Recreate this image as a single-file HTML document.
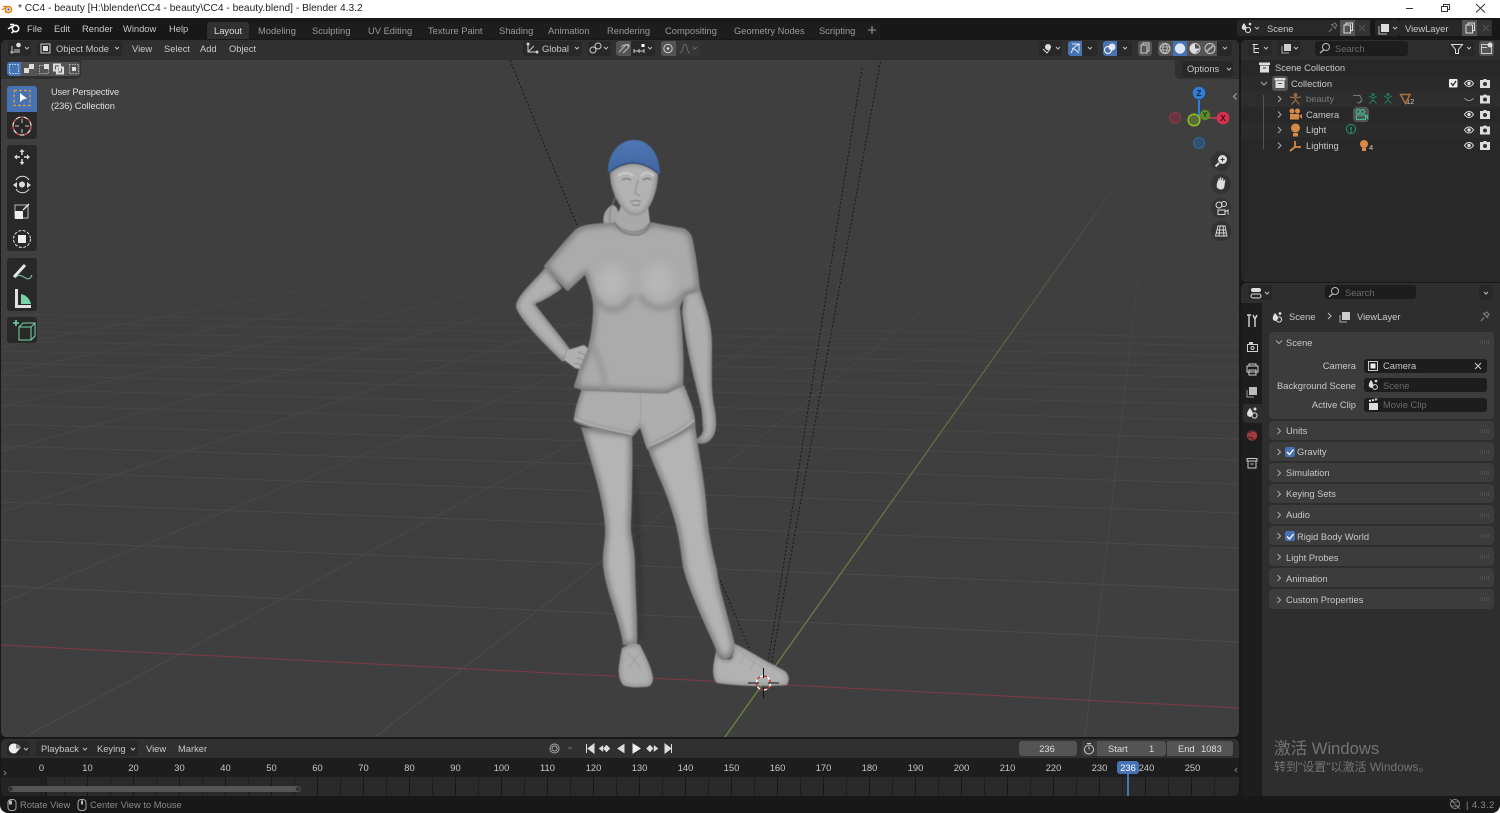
<!DOCTYPE html>
<html lang="zh"><head><meta charset="utf-8"><title>Blender</title>
<style>
html,body{margin:0;padding:0;background:#fff}
#r{position:relative;width:1500px;height:813px;overflow:hidden;background:#fff;font-family:"Liberation Sans","Noto Sans CJK SC",sans-serif;font-size:9.35px;color:#c8c8c8;filter:blur(.3px)}
#r>div,.b{position:absolute}
.t{position:absolute;white-space:nowrap;line-height:12px;transform:translateY(-50%);margin-top:1px}
.c{transform:translate(-50%,-50%)}
.rt{transform:translate(-100%,-50%)}
.d{color:#9a9a9a}
.f{color:#6a6a6a}
svg{position:absolute;left:0;top:0}
.w{background:#282828;border-radius:3px}
.g{background:#545454}
.bl{background:#4772b3}
.p{background:#3c3c3c;border-radius:4px;left:1269px;width:225px}
.tool{background:#282828;left:7px;width:30px}
</style></head><body><div id="r">
<!-- title bar -->
<div style="left:0;top:0;width:1500px;height:18px;background:#fff"></div>
<div class="t" style="left:18px;top:8px;font-size:10.2px;color:#222">* CC4 - beauty [H:\blender\CC4 - beauty\CC4 - beauty.blend] - Blender 4.3.2</div>
<!-- main dark background -->
<div style="left:0;top:18px;width:1500px;height:795px;background:#181818;border-radius:0 0 8px 8px"></div>
<!-- top bar -->
<div style="left:207px;top:22px;width:42px;height:17px;background:#303030;border-radius:3px 3px 0 0"></div>
<div style="left:249px;top:22px;width:631px;height:17px;background:#1d1d1d;border-radius:3px 3px 0 0"></div>
<div class="t" style="left:27px;top:27.5px">File</div>
<div class="t" style="left:54px;top:27.5px">Edit</div>
<div class="t" style="left:82px;top:27.5px">Render</div>
<div class="t" style="left:123px;top:27.5px">Window</div>
<div class="t" style="left:169px;top:27.5px">Help</div>
<div class="t" style="left:214px;top:29.5px;color:#ddd">Layout</div>
<div class="t d" style="left:258px;top:29.5px">Modeling</div>
<div class="t d" style="left:312px;top:29.5px">Sculpting</div>
<div class="t d" style="left:368px;top:29.5px">UV Editing</div>
<div class="t d" style="left:428px;top:29.5px">Texture Paint</div>
<div class="t d" style="left:499px;top:29.5px">Shading</div>
<div class="t d" style="left:548px;top:29.5px">Animation</div>
<div class="t d" style="left:607px;top:29.5px">Rendering</div>
<div class="t d" style="left:665px;top:29.5px">Compositing</div>
<div class="t d" style="left:734px;top:29.5px">Geometry Nodes</div>
<div class="t d" style="left:819px;top:29.5px">Scripting</div>
<div class="w" style="left:1237px;top:20px;width:25px;height:16px"></div>
<div style="left:1262px;top:20px;width:78px;height:16px;background:#282828"></div>
<div class="g" style="left:1340px;top:20px;width:15px;height:16px"></div>
<div style="left:1355px;top:20px;width:15px;height:16px;background:#333"></div>
<div class="w" style="left:1375px;top:20px;width:25px;height:16px"></div>
<div style="left:1400px;top:20px;width:62px;height:16px;background:#282828"></div>
<div class="g" style="left:1462px;top:20px;width:15px;height:16px"></div>
<div style="left:1477px;top:20px;width:15px;height:16px;background:#333"></div>
<div class="t" style="left:1267px;top:27.5px">Scene</div>
<div class="t" style="left:1405px;top:27.5px">ViewLayer</div>

<!-- viewport -->
<div style="left:1px;top:40px;width:1238px;height:697px;background:#3f3f3f;border-radius:5px;overflow:hidden">
<svg width="1238" height="697" viewBox="1 40 1238 697">
<defs>
<linearGradient id="fade" gradientUnits="userSpaceOnUse" x1="0" y1="737" x2="0" y2="160"><stop offset="0" stop-color="#fff"/><stop offset=".65" stop-color="#999"/><stop offset="1" stop-color="#000"/></linearGradient>
<mask id="m" maskUnits="userSpaceOnUse" x="0" y="40" width="1240" height="700"><rect x="0" y="40" width="1240" height="700" fill="url(#fade)"/></mask>
<linearGradient id="cap" x1="0" x2="0" y1="0" y2="1"><stop offset="0" stop-color="#4f78b4"/><stop offset="1" stop-color="#3f659f"/></linearGradient>
<filter id="bl" x="-20%" y="-20%" width="140%" height="140%"><feGaussianBlur stdDeviation=".4"/></filter>
<filter id="b2" x="-50%" y="-50%" width="200%" height="200%"><feGaussianBlur stdDeviation="2"/></filter>
<filter id="b3" x="-50%" y="-50%" width="200%" height="200%"><feGaussianBlur stdDeviation="3"/></filter>
<filter id="b6" x="-80%" y="-80%" width="260%" height="260%"><feGaussianBlur stdDeviation="6"/></filter>
<path id="pRA" d="M684,293L700,289C707,310 712,325 712,345C712,370 711,390 714,405C716,415 717,425 715,432C712,442 704,446 694,442C698,438 704,434 703,428C702,415 702,410 700,403C696,385 686,350 682,312Z"/>
<path id="pLA" d="M546,267C530,285 518,295 516,305C515,315 545,345 563,362L572,352C560,335 545,318 535,304C545,300 555,294 562,288Z"/>
<path id="pLL" d="M581,427C590,460 603,495 605,527C606,540 602,550 603,565C605,590 620,620 623,645L637,645C638,620 635,590 635,565C635,545 630,535 631,525C632,495 633,465 632,434Z"/>
<path id="pRL" d="M648,449C655,470 668,495 673,515C678,530 680,545 683,567C688,590 708,630 717,652C722,664 733,660 735,645C728,615 718,585 717,570C712,550 708,530 707,513C705,480 697,445 695,423Z"/>
<path id="pSH" d="M582,388C578,400 574,412 574,420C578,425 610,432 633,436L640,428C643,436 645,445 647,449C660,445 685,430 695,423C696,415 690,400 684,385Z"/>
<path id="pTS" d="M615,222C600,224 585,223 576,229C565,240 553,255 544,266C552,275 560,284 568,291L585,275C590,290 594,300 593,312C592,330 590,340 588,347C584,360 578,370 578,373C576,380 574,385 574,387L583,390C610,391 640,393 667,393L683,385C684,370 684,345 680,307L685,295L700,290C698,270 696,255 692,237C690,232 686,229 683,228C670,226 660,224 650,222C645,232 625,232 615,222Z"/>
<path id="pHD" d="M610,172C610,190 618,205 626,212C632,217 640,217 645,212C652,205 658,190 658,172C650,160 620,160 610,172Z"/>
<path id="pNK" d="M621,205L615,222C625,234 642,234 650,222L648,205Z"/>
<path id="pSL" d="M622,648C627,645 635,642 640,645C648,660 652,670 653,678C653,684 650,687 645,687C635,688 626,687 623,685C619,680 618,672 619,665C620,658 621,652 622,648Z"/>
<path id="pSR" d="M716,652C719,660 728,662 732,658C734,652 734,648 735,644C745,648 760,658 770,663L785,671C789,675 790,680 787,685C765,687 735,686 717,683C712,678 712,668 716,652Z"/>
<clipPath id="cRA"><use href="#pRA"/></clipPath><clipPath id="cLA"><use href="#pLA"/></clipPath>
<clipPath id="cLL"><use href="#pLL"/></clipPath><clipPath id="cRL"><use href="#pRL"/></clipPath>
<clipPath id="cSH"><use href="#pSH"/></clipPath><clipPath id="cTS"><use href="#pTS"/></clipPath>
<clipPath id="cHD"><use href="#pHD"/></clipPath><clipPath id="cNK"><use href="#pNK"/></clipPath>
<clipPath id="cSL"><use href="#pSL"/></clipPath><clipPath id="cSR"><use href="#pSR"/></clipPath>
</defs>
<g mask="url(#m)" stroke="#4c4c4c" stroke-width="1" fill="none">
<path d="M0,586L1240,642M0,540L1240,590M0,502L1240,548M0,471L1240,513M0,446L1240,484M0,424L1240,460M0,405L1240,439M0,389L1240,421M0,375L1240,405M0,363L1240,391M0,351L1240,378M0,341L1240,367M0,331L1240,356M0,322L1240,346M0,314L1240,338"/>
<path d="M375,737L1155,130M25,737L1155,130M-325,737L1155,130M-675,737L1155,130M-1025,737L1155,130M-1375,737L1155,130M-1725,737L1155,130M-2075,737L1155,130M1085,737L1155,130M1425,737L1155,130M1775,737L1155,130"/>
</g>
<path d="M0,645L1240,708" stroke="#7c3a44" stroke-width="1.1" fill="none"/>
<g mask="url(#m)"><path d="M725,737L1155,130" stroke="#6b8a40" stroke-width="1.3" fill="none"/></g>
<g stroke="#141414" stroke-width=".9" stroke-dasharray="2 2" fill="none">
<path d="M510,60L578,228"/><path d="M862,68L765,682"/><path d="M884,42L768,682"/><path d="M720,580L750,650"/>
</g>
<!-- figure -->
<g filter="url(#b2)" fill="#2c2c2c" opacity=".4"><path d="M632,470C633,500 634,530 636,565C638,590 640,610 638,640L642,640C644,610 642,570 640,525C640,510 638,490 636,470Z"/></g>
<g filter="url(#bl)">
<path d="M612,205C603,210 601,222 606,226L618,222C620,215 618,205 612,205Z" fill="#a4a4a4"/>
<path d="M616,196C612,205 608,212 610,222" stroke="#7d7d7d" fill="none"/>
<g clip-path="url(#cRA)"><use href="#pRA" fill="#aeaeae"/><use href="#pRA" fill="none" stroke="#7a7a7a" stroke-width="4" filter="url(#b2)"/></g>
<g clip-path="url(#cLA)"><use href="#pLA" fill="#b0b0b0"/><use href="#pLA" fill="none" stroke="#7d7d7d" stroke-width="4" filter="url(#b2)"/></g>
<path d="M564,360L568,350L584,345L590,350L601,356L602,362L590,366L586,371L575,368Z" fill="#b0b0b0"/>
<path d="M578,352L592,357M577,358L596,363M575,363L588,367" stroke="#7e7e7e" stroke-width=".7" fill="none"/>
<g clip-path="url(#cLL)"><use href="#pLL" fill="#b4b4b4"/><use href="#pLL" fill="none" stroke="#757575" stroke-width="6" filter="url(#b3)"/></g>
<g clip-path="url(#cRL)"><use href="#pRL" fill="#b4b4b4"/><use href="#pRL" fill="none" stroke="#767676" stroke-width="6" filter="url(#b3)"/></g>
<g clip-path="url(#cSL)"><use href="#pSL" fill="#afafaf"/><use href="#pSL" fill="none" stroke="#858585" stroke-width="3" filter="url(#b2)"/></g>
<path d="M627,652L641,668M639,654L629,668" stroke="#939393" stroke-width=".6" fill="none"/>
<g clip-path="url(#cSR)"><use href="#pSR" fill="#b2b2b2"/><use href="#pSR" fill="none" stroke="#8a8a8a" stroke-width="3" filter="url(#b2)"/></g>
<path d="M738,650L765,670M745,655L739,664M755,660L750,670" stroke="#979797" stroke-width=".6" fill="none"/>
<path d="M716,651C720,663 730,662 734,652" stroke="#8c8c8c" stroke-width=".8" fill="none"/>
<g clip-path="url(#cSH)"><use href="#pSH" fill="#adadad"/><use href="#pSH" fill="none" stroke="#828282" stroke-width="5" filter="url(#b2)"/></g>
<path d="M574,420C580,425 610,433 633,436M647,449C660,445 685,432 695,423" stroke="#838383" stroke-width="1.8" fill="none"/>
<path d="M574,418C580,423 610,430 632,434M648,446C660,442 684,430 694,420" stroke="#c4c4c4" stroke-width=".9" fill="none"/>
<path d="M640,392C642,405 640,418 640,428" stroke="#9c9c9c" stroke-width="1" fill="none"/>
<g clip-path="url(#cTS)">
<use href="#pTS" fill="#ababab"/>
<use href="#pTS" fill="none" stroke="#7c7c7c" stroke-width="7" filter="url(#b3)"/>
<path d="M635,250V298" stroke="#959595" stroke-width="8" filter="url(#b6)" fill="none"/>
<ellipse cx="612" cy="283" rx="15" ry="18" fill="#bdbdbd" opacity=".7" filter="url(#b6)"/>
<ellipse cx="658" cy="282" rx="15" ry="18" fill="#bdbdbd" opacity=".7" filter="url(#b6)"/>
<path d="M596,298C605,316 625,312 632,295M640,295C648,312 670,312 680,298" stroke="#868686" stroke-width="4" filter="url(#b3)" fill="none"/>
<path d="M592,345C600,360 606,380 604,392" fill="none" stroke="#939393" stroke-width="4" filter="url(#b3)"/>
</g>
<path d="M544,266C552,275 560,284 568,291M685,295L700,290" stroke="#858585" stroke-width=".8" fill="none"/>
<path d="M574,387L583,390C610,391 640,393 667,393L683,385" stroke="#7a7a7a" stroke-width="1" fill="none"/>
<g clip-path="url(#cNK)"><use href="#pNK" fill="#a9a9a9"/></g>
<path d="M615,222C618,232 628,235 635,235C642,235 648,232 650,222" stroke="#6f6f6f" stroke-width="1" fill="none"/>
<g clip-path="url(#cHD)"><use href="#pHD" fill="#b2b2b2"/><use href="#pHD" fill="none" stroke="#848484" stroke-width="4" filter="url(#b2)"/></g>
<path d="M618,176C624,171 630,173 633,176M641,176C645,171 650,172 654,176" stroke="#d2d2d2" stroke-width="1.6" fill="none"/>
<path d="M622,180C625,178 628,178 631,180M643,180C646,178 649,178 651,180" stroke="#555" stroke-width="1" fill="none"/>
<path d="M638,180L635,193L640,196" stroke="#808080" stroke-width=".8" fill="none"/>
<path d="M630,202C634,200 638,200 641,202M632,204C635,206 638,206 640,204" stroke="#6b6b6b" stroke-width=".9" fill="none"/>
<path d="M608,174C607,155 618,140 634,140C650,140 660,155 660,175C652,168 642,163 632,163C622,164 612,170 608,174Z" fill="url(#cap)"/>
<path d="M608,174C614,168 622,164 632,163C642,163 652,168 660,175" stroke="#23375a" stroke-width="1.2" fill="none"/>
<path d="M634,141L635,162M622,144C619,150 618,158 618,166M647,144C650,150 651,158 652,166" stroke="#446ca8" stroke-width=".6" fill="none"/>
</g>
<!-- 3D cursor -->
<circle cx="763.5" cy="683" r="7" fill="none" stroke="#fff" stroke-width="1.4" stroke-dasharray="3.6 3.7"/>
<circle cx="763.5" cy="683" r="7" fill="none" stroke="#d23333" stroke-width="1.4" stroke-dasharray="3.6 3.7" stroke-dashoffset="3.6"/>
<path d="M748,683H759M768,683H779M763.5,668V678M763.5,688V698" stroke="#111" stroke-width="1"/>
</svg>
</div>
<!-- viewport header -->
<div style="left:1px;top:40px;width:1238px;height:20px;background:#303030;border-radius:5px 5px 0 0"></div>
<div style="left:1px;top:60px;width:80px;height:19px;background:#303030;border-radius:0 0 5px 0"></div>
<div style="left:1175px;top:60px;width:64px;height:19px;background:#303030;border-radius:0 0 0 5px"></div>
<div class="w" style="left:8px;top:41px;width:23px;height:15px"></div>
<div class="w" style="left:37px;top:41px;width:85px;height:15px"></div>
<div class="t" style="left:56px;top:47.5px">Object Mode</div>
<div class="t" style="left:132px;top:47.5px">View</div>
<div class="t" style="left:164px;top:47.5px">Select</div>
<div class="t" style="left:200px;top:47.5px">Add</div>
<div class="t" style="left:229px;top:47.5px">Object</div>
<div class="w" style="left:523px;top:41px;width:59px;height:15px"></div>
<div class="t" style="left:542px;top:47.5px">Global</div>
<div class="w" style="left:588px;top:41px;width:23px;height:15px"></div>
<div class="g" style="left:616px;top:41px;width:15px;height:15px;border-radius:3px 0 0 3px"></div>
<div class="w" style="left:631px;top:41px;width:24px;height:15px;border-radius:0 3px 3px 0"></div>
<div class="g" style="left:661px;top:41px;width:15px;height:15px;border-radius:3px 0 0 3px"></div>
<div style="left:676px;top:41px;width:24px;height:15px;background:#353535;border-radius:0 3px 3px 0"></div>
<div class="w" style="left:1039px;top:41px;width:23px;height:15px"></div>
<div class="bl" style="left:1068px;top:41px;width:14px;height:15px;border-radius:3px 0 0 3px"></div>
<div class="w" style="left:1082px;top:41px;width:15px;height:15px;border-radius:0 3px 3px 0"></div>
<div class="bl" style="left:1103px;top:41px;width:14px;height:15px;border-radius:3px 0 0 3px"></div>
<div class="w" style="left:1117px;top:41px;width:15px;height:15px;border-radius:0 3px 3px 0"></div>
<div class="g" style="left:1138px;top:41px;width:14px;height:15px;border-radius:3px"></div>
<div class="g" style="left:1158px;top:41px;width:59px;height:15px;border-radius:3px 0 0 3px"></div>
<div class="bl" style="left:1173px;top:41px;width:14px;height:15px"></div>
<div class="w" style="left:1217px;top:41px;width:15px;height:15px;border-radius:0 3px 3px 0"></div>
<div class="w" style="left:1182px;top:61px;width:51px;height:16px"></div>
<div class="t" style="left:1187px;top:68px">Options</div>
<!-- select mode row -->
<div class="bl" style="left:7px;top:62px;width:14px;height:14px;border-radius:3px 0 0 3px"></div>
<div style="left:21px;top:62px;width:59px;height:14px;background:#545454;border-radius:0 3px 3px 0"></div>
<div class="t" style="left:51px;top:90.5px;color:#ddd;letter-spacing:-.2px">User Perspective</div>
<div class="t" style="left:51px;top:104.5px;color:#ddd;letter-spacing:-.1px">(236) Collection</div>
<!-- tools -->
<div class="bl" style="left:7px;top:86px;width:30px;height:26px;border-radius:3px 3px 0 0"></div>
<div class="tool" style="top:112px;height:27px;border-radius:0 0 3px 3px"></div>
<div class="tool" style="top:145px;height:106px;border-radius:3px"></div>
<div class="tool" style="top:258px;height:53px;border-radius:3px"></div>
<div class="tool" style="top:317px;height:26px;border-radius:3px"></div>
<!-- nav buttons -->
<div style="left:1211px;top:151px;width:20px;height:20px;border-radius:50%;background:#333"></div>
<div style="left:1211px;top:174px;width:20px;height:20px;border-radius:50%;background:#333"></div>
<div style="left:1211px;top:198px;width:20px;height:20px;border-radius:50%;background:#333"></div>
<div style="left:1211px;top:221px;width:20px;height:20px;border-radius:50%;background:#333"></div>

<!-- timeline -->
<div style="left:1px;top:739px;width:1238px;height:57px;background:#2a2a2a;border-radius:5px;overflow:hidden">
 <div style="position:absolute;left:0;top:0;width:1238px;height:19px;background:#303030"></div>
 <div style="position:absolute;left:0;top:19px;width:1238px;height:19px;background:#1d1d1d"></div>
 <div style="position:absolute;left:0;top:38px;width:45px;height:19px;background:#232323"></div>
</div>
<div class="w" style="left:7px;top:741px;width:23px;height:15px"></div>
<div class="w" style="left:36px;top:741px;width:102px;height:15px"></div>
<div class="t" style="left:41px;top:748px">Playback</div>
<div class="t" style="left:97px;top:748px">Keying</div>
<div class="t" style="left:146px;top:748px">View</div>
<div class="t" style="left:178px;top:748px">Marker</div>
<div class="g" style="left:1019px;top:741px;width:58px;height:15px;border-radius:3px"></div>
<div class="t c" style="left:1047px;top:748px;color:#ddd">236</div>
<div class="g" style="left:1082px;top:741px;width:84px;height:15px;border-radius:3px"></div>
<div class="g" style="left:1167px;top:741px;width:66px;height:15px;border-radius:0 3px 3px 0"></div>
<div style="left:1082px;top:741px;width:15px;height:15px;background:#3c3c3c;border-radius:3px 0 0 3px"></div>
<div class="t" style="left:1108px;top:748px;color:#ddd">Start</div>
<div class="t" style="left:1149px;top:748px;color:#ddd">1</div>
<div class="t" style="left:1178px;top:748px;color:#ddd">End</div>
<div class="t" style="left:1201px;top:748px;color:#ddd">1083</div>
<svg width="1500" height="813" style="pointer-events:none">
<g stroke="#1f1f1f" stroke-width="1"><path d="M64.5,777V796M110.5,777V796M156.5,777V796M202.5,777V796M248.5,777V796M294.5,777V796M340.5,777V796M386.5,777V796M432.5,777V796M478.5,777V796M524.5,777V796M570.5,777V796M616.5,777V796M662.5,777V796M708.5,777V796M754.5,777V796M800.5,777V796M846.5,777V796M892.5,777V796M938.5,777V796M984.5,777V796M1030.5,777V796M1076.5,777V796M1122.5,777V796M1168.5,777V796M1214.5,777V796"/></g>
<g stroke="#181818" stroke-width="1"><path d="M41.5,777V796M87.5,777V796M133.5,777V796M179.5,777V796M225.5,777V796M271.5,777V796M317.5,777V796M363.5,777V796M409.5,777V796M455.5,777V796M501.5,777V796M547.5,777V796M593.5,777V796M639.5,777V796M685.5,777V796M731.5,777V796M777.5,777V796M823.5,777V796M869.5,777V796M915.5,777V796M961.5,777V796M1007.5,777V796M1053.5,777V796M1099.5,777V796M1145.5,777V796M1191.5,777V796"/></g>
<path d="M46,777V796" stroke="#111"/>
<rect x="8" y="786" width="293" height="6" rx="3" fill="#555"/>
<circle cx="10.5" cy="789" r="2.3" fill="#333"/><circle cx="298" cy="789" r="2.3" fill="#333"/>
</svg>
<div class="t c" style="left:41.5px;top:767px">0</div><div class="t c" style="left:87.5px;top:767px">10</div><div class="t c" style="left:133.5px;top:767px">20</div><div class="t c" style="left:179.5px;top:767px">30</div><div class="t c" style="left:225.5px;top:767px">40</div><div class="t c" style="left:271.5px;top:767px">50</div><div class="t c" style="left:317.5px;top:767px">60</div><div class="t c" style="left:363.5px;top:767px">70</div><div class="t c" style="left:409.5px;top:767px">80</div><div class="t c" style="left:455.5px;top:767px">90</div><div class="t c" style="left:501.5px;top:767px">100</div><div class="t c" style="left:547.5px;top:767px">110</div><div class="t c" style="left:593.5px;top:767px">120</div><div class="t c" style="left:639.5px;top:767px">130</div><div class="t c" style="left:685.5px;top:767px">140</div><div class="t c" style="left:731.5px;top:767px">150</div><div class="t c" style="left:777.5px;top:767px">160</div><div class="t c" style="left:823.5px;top:767px">170</div><div class="t c" style="left:869.5px;top:767px">180</div><div class="t c" style="left:915.5px;top:767px">190</div><div class="t c" style="left:961.5px;top:767px">200</div><div class="t c" style="left:1007.5px;top:767px">210</div><div class="t c" style="left:1053.5px;top:767px">220</div><div class="t c" style="left:1099.5px;top:767px">230</div><div class="t c" style="left:1146.5px;top:767px">240</div><div class="t c" style="left:1192.5px;top:767px">250</div>
<div class="bl" style="left:1117px;top:761px;width:22px;height:13px;border-radius:3px"></div>
<div class="bl" style="left:1127px;top:774px;width:2px;height:22px"></div>
<div class="t c" style="left:1128px;top:766.5px;color:#fff">236</div>

<!-- status bar -->
<div class="t f" style="left:20px;top:803.5px;color:#8a8a8a">Rotate View</div>
<div class="t f" style="left:90px;top:803.5px;color:#8a8a8a">Center View to Mouse</div>
<div class="t" style="left:1466px;top:803.5px;color:#8a8a8a;letter-spacing:.4px">| 4.3.2</div>

<!-- outliner -->
<div style="left:1241px;top:40px;width:259px;height:242px;background:#282828;border-radius:5px 0 0 5px;overflow:hidden">
 <div style="position:absolute;left:0;top:0;width:259px;height:20px;background:#2e2e2e"></div>
 <div style="position:absolute;left:0;top:35.5px;width:259px;height:15.5px;background:#2b2b2b"></div>
 <div style="position:absolute;left:0;top:51px;width:259px;height:15.5px;background:#2d2d2d"></div>
 <div style="position:absolute;left:0;top:82px;width:259px;height:15.5px;background:#2b2b2b"></div>
</div>
<div class="w" style="left:1248px;top:41px;width:24px;height:15px"></div>
<div class="w" style="left:1277px;top:41px;width:24px;height:15px"></div>
<div style="left:1315px;top:41px;width:93px;height:15px;background:#1d1d1d;border-radius:3px"></div>
<div class="t f" style="left:1335px;top:47.5px">Search</div>
<div class="w" style="left:1449px;top:41px;width:25px;height:15px"></div>
<div class="g" style="left:1479px;top:41px;width:15px;height:15px;border-radius:3px"></div>
<div class="t" style="left:1275px;top:67px">Scene Collection</div>
<div style="left:1272px;top:76px;width:16px;height:15px;background:#545454;border-radius:3px"></div>
<div class="t" style="left:1291px;top:82.5px">Collection</div>
<div class="t" style="left:1306px;top:98px;color:#7a7a7a">beauty</div>
<div class="t" style="left:1306px;top:113.5px">Camera</div>
<div class="t" style="left:1306px;top:129px">Light</div>
<div class="t" style="left:1306px;top:144.5px">Lighting</div>
<div style="left:1353px;top:107px;width:16px;height:15px;background:#545454;border-radius:4px"></div>
<div class="t" style="left:1406px;top:101px;font-size:7.5px">12</div>
<div class="t" style="left:1369px;top:147px;font-size:7.5px">4</div>

<!-- properties -->
<div style="left:1241px;top:283px;width:259px;height:513px;background:#2e2e2e;border-radius:5px 0 0 5px"></div>
<div style="left:1241px;top:303px;width:21px;height:493px;background:#1d1d1d;border-radius:0 0 0 5px"></div>
<div style="left:1243px;top:404px;width:19px;height:19px;background:#2e2e2e;border-radius:3px 0 0 3px"></div>
<div class="w" style="left:1248px;top:285px;width:24px;height:15px"></div>
<div style="left:1325px;top:285px;width:91px;height:14px;background:#1d1d1d;border-radius:3px"></div>
<div class="t f" style="left:1345px;top:291.5px">Search</div>
<div class="w" style="left:1479px;top:285px;width:14px;height:15px"></div>
<div class="t" style="left:1289px;top:315.5px">Scene</div>
<div class="t" style="left:1357px;top:315.5px">ViewLayer</div>
<div class="p" style="top:332px;height:87px"></div>
<div class="p" style="top:421px;height:19px"></div>
<div class="p" style="top:442px;height:19px"></div>
<div class="p" style="top:463px;height:19px"></div>
<div class="p" style="top:484px;height:19px"></div>
<div class="p" style="top:505px;height:19px"></div>
<div class="p" style="top:526px;height:19px"></div>
<div class="p" style="top:547px;height:19px"></div>
<div class="p" style="top:568px;height:19px"></div>
<div class="p" style="top:589px;height:20px"></div>
<div class="t" style="left:1286px;top:341.5px">Scene</div>
<div class="t rt" style="left:1356px;top:365px">Camera</div>
<div class="t rt" style="left:1356px;top:384.5px">Background Scene</div>
<div class="t rt" style="left:1356px;top:404px">Active Clip</div>
<div style="left:1364px;top:359px;width:123px;height:14px;background:#1d1d1d;border-radius:3px"></div>
<div style="left:1364px;top:378px;width:123px;height:14px;background:#1d1d1d;border-radius:3px"></div>
<div style="left:1364px;top:398px;width:123px;height:14px;background:#1d1d1d;border-radius:3px"></div>
<div class="t" style="left:1383px;top:365px">Camera</div>
<div class="t f" style="left:1383px;top:384.5px">Scene</div>
<div class="t f" style="left:1383px;top:404px">Movie Clip</div>
<div class="t" style="left:1286px;top:430px">Units</div>
<div class="bl" style="left:1285px;top:447px;width:10px;height:10px;border-radius:2px"></div>
<div class="t" style="left:1297px;top:451px">Gravity</div>
<div class="t" style="left:1286px;top:472px">Simulation</div>
<div class="t" style="left:1286px;top:493px">Keying Sets</div>
<div class="t" style="left:1286px;top:514px">Audio</div>
<div class="bl" style="left:1285px;top:531px;width:10px;height:10px;border-radius:2px"></div>
<div class="t" style="left:1297px;top:535.5px">Rigid Body World</div>
<div class="t" style="left:1286px;top:556.5px">Light Probes</div>
<div class="t" style="left:1286px;top:577.5px">Animation</div>
<div class="t" style="left:1286px;top:599px">Custom Properties</div>
<div class="t" style="left:1274px;top:747.5px;font-size:16.6px;color:#747474">激活 Windows</div>
<div class="t" style="left:1274px;top:766px;font-size:12px;color:#747474">转到"设置"以激活 Windows。</div>

<!-- icon overlay -->
<svg width="1500" height="813" fill="none" stroke="#cfcfcf" stroke-width="1">
<!-- window controls -->
<path d="M1406,8.5H1413" stroke="#333"/><path d="M1441.5,6.5H1447.5V11.5H1441.5ZM1443.5,6.5V4.5H1449.5V9.5H1447.5" stroke="#333"/><path d="M1476,4L1485,12.5M1485,4L1476,12.5" stroke="#333"/>
<!-- blender logos -->
<circle cx="8.5" cy="9.5" r="3" fill="#fff" stroke="#e87d0d" stroke-width="1.5"/><circle cx="8.5" cy="9.5" r="1.2" fill="#3b6cb0" stroke="none"/><path d="M2,10L6,7.5M3,6.5H7M5,13L7,11" stroke="#e87d0d" stroke-width="1.3"/>
<circle cx="15.5" cy="28.5" r="3.2" stroke="#fff" stroke-width="1.6"/><path d="M8,29L12.5,26M10,24.5H14M11.5,33L14,31" stroke="#fff" stroke-width="1.5"/>
<path d="M868,30H876M872,26V34" stroke="#9a9a9a" stroke-width="1.1"/>
<!-- chevrons -->
<g stroke="#c0c0c0" stroke-width="1"><path d="M25,47L27,49L29,47M115,47L117,49L119,47M575,47L577,49L579,47M604,47L606,49L608,47M648,47L650,49L652,47M1056,47L1058,49L1060,47M1088,47L1090,49L1092,47M1123,47L1125,49L1127,47M1223,47L1225,49L1227,47M1227,68L1229,70L1231,68M1264,47L1266,49L1268,47M1294,47L1296,49L1298,47M1467,47L1469,49L1471,47M1265,292L1267,294L1269,292M1484,292L1486,294L1488,292M24,748L26,750L28,748M83,748L85,750L87,748M131,748L133,750L135,748M1255,27L1257,29L1259,27M1393,27L1395,29L1397,27"/></g>
<path d="M693,47L695,49L697,47" stroke="#666"/>
<!-- editor type viewport -->
<path d="M12,46V54M10,52H20M14,50H20" stroke="#d0d0d0"/><circle cx="18.5" cy="45" r="2.3" fill="#e0e0e0" stroke="none"/>
<!-- object mode -->
<rect x="41" y="44" width="9" height="9" stroke="#ccc"/><rect x="43" y="46" width="5" height="5" fill="#ddd" stroke="none"/>
<!-- select mode icons -->
<rect x="9.5" y="64.5" width="9" height="9" stroke="#bcd4f4" stroke-dasharray="1.5 1"/>
<path d="M24,73V68H29V64H34V69H29V73Z" fill="#ddd" stroke="none"/>
<rect x="39.5" y="65.5" width="9" height="8" stroke="#aaa" stroke-dasharray="1.5 1"/><rect x="44" y="64" width="5" height="5" fill="#ddd" stroke="none"/>
<rect x="54" y="64.5" width="6" height="6" stroke="#ddd" stroke-width="2"/><rect x="57" y="67.5" width="6" height="6" stroke="#ddd" stroke-width="2"/>
<rect x="69.5" y="64.5" width="9" height="9" stroke="#aaa" stroke-dasharray="1.5 1"/><rect x="72" y="67" width="4" height="4" fill="#ddd" stroke="none"/>
<!-- tool icons -->
<rect x="14" y="90.5" width="16" height="15" stroke="#e2a33b" stroke-width="1.2" stroke-dasharray="3 2"/><path d="M20,93L20,102L23,99.5L27,98.5Z" fill="#fff" stroke="none"/>
<circle cx="22" cy="126" r="9" stroke="#ddd" stroke-width="1.3"/><circle cx="22" cy="126" r="9" stroke="#c83a3a" stroke-width="1.3" stroke-dasharray="4 4"/><path d="M22,119V123M22,129V133M15,126H19M25,126H29" stroke="#ccc"/>
<path d="M22,151V155M22,159V163M16,157H20M24,157H28" stroke="#ddd" stroke-width="1.5"/><path d="M22,149L19.5,152H24.5ZM22,165L19.5,162H24.5ZM14,157L17,154.5V159.5ZM30,157L27,154.5V159.5Z" fill="#ddd" stroke="none"/>
<circle cx="22" cy="184.5" r="3" fill="#ddd" stroke="none"/><path d="M16,180C19,175 26,175 29,180M16,189C19,194 26,194 29,189" stroke="#ddd"/><path d="M13,185L17,182V188ZM31,185L27,182V188Z" fill="#ddd" stroke="none"/>
<rect x="15" y="205" width="13" height="13" stroke="#bbb"/><rect x="15" y="211" width="8" height="8" fill="#eee" stroke="none"/><path d="M23,210L29,204" stroke="#eee" stroke-width="1.3"/>
<circle cx="22" cy="239" r="8.5" stroke="#ddd" stroke-dasharray="3 1.5"/><rect x="18" y="235" width="8" height="8" fill="#eee" stroke="none"/>
<path d="M14,277L25,265" stroke="#e8e8e8" stroke-width="3"/><path d="M15,278C20,272 24,278 28,279C30,279 31,277 32,275" stroke="#74c39e" stroke-width="1.1"/>
<path d="M15,289H18V305H31V308H15Z" fill="#e0e0e0" stroke="none"/><path d="M21,294C26,295 30,299 31,304H21Z" fill="#78d3a6" stroke="none"/>
<path d="M19,327H31V340H19ZM19,327L23,323H35V336L31,340M31,327L35,323" stroke="#77d3a5" stroke-width="1"/><path d="M16,320V326M13,323H19" stroke="#77d3a5" stroke-width="1.6"/>
<!-- header center icons -->
<path d="M528,44V52H536M528,52L534,46" stroke="#ccc"/><circle cx="528" cy="44" r="1" fill="#ccc"/><circle cx="537" cy="52" r="1" fill="#ccc"/>
<circle cx="593" cy="50" r="3" stroke="#ccc"/><circle cx="598" cy="46" r="3" stroke="#ccc"/>
<path d="M619,52L626,45C629,43 630,46 628,48L623,53M621,47C624,44 627,44 629,47" stroke="#bbb"/>
<path d="M634,49V53M634,51H644M639,49V53M644,49V53" stroke="#ccc"/><rect x="641.5" y="44" width="3" height="3" fill="#fff" stroke="none"/>
<circle cx="668" cy="48.5" r="4.2" stroke="#ccc"/><circle cx="668" cy="48.5" r="1.2" fill="#eee" stroke="none"/>
<path d="M680,53C683,53 683,44 685,44C687,44 687,53 690,53" stroke="#666"/>
<!-- overlays -->
<circle cx="1048" cy="47" r="3" fill="#ddd" stroke="none"/><path d="M1043,49L1047,53L1050,49" stroke="#ddd"/>
<path d="M1071,53C1074,46 1077,45 1080,44M1072,44H1079V51M1072,48C1075,49 1078,52 1079,53" stroke="#e0e8f4"/>
<circle cx="1112" cy="47" r="3.5" fill="#dfe6f2" stroke="none"/><circle cx="1108" cy="50" r="3.5" stroke="#fff"/>
<rect x="1141" y="45" width="6" height="8" stroke="#ccc"/><path d="M1143,45V43H1149V51H1147" stroke="#ccc"/>
<circle cx="1165" cy="48.5" r="5" stroke="#ccc"/><path d="M1160,47H1170M1160,50H1170M1165,43.5C1162,46 1162,51 1165,53.5C1168,51 1168,46 1165,43.5Z" stroke="#ccc" stroke-width=".8"/>
<circle cx="1180" cy="48.5" r="5.2" fill="#dfe7f4" stroke="none"/>
<circle cx="1195" cy="48.5" r="5" stroke="#ccc"/><path d="M1195,43.5A5,5 0 0 0 1195,53.5L1200,48.5H1195Z" fill="#ddd" stroke="none"/>
<circle cx="1210" cy="48.5" r="5" stroke="#ccc"/><path d="M1206,52L1214,45" stroke="#aaa" stroke-width="2"/>
<!-- gizmo -->
<path d="M1199,100V118" stroke="#2f80d8" stroke-width="2"/><path d="M1199,118H1217" stroke="#cf3a50" stroke-width="1.6"/>
<circle cx="1205" cy="115" r="5.2" fill="#5b8a28" stroke="none"/>
<circle cx="1175" cy="118" r="5.5" fill="#6c3440" stroke="#8b3a48"/>
<circle cx="1199" cy="143" r="5.5" fill="#34506f" stroke="#2f6aab"/>
<circle cx="1194" cy="120" r="5.8" fill="#5a6a3a" stroke="#8cc51f" stroke-width="1.5"/>
<circle cx="1199" cy="93" r="6.3" fill="#2d7fd6" stroke="none"/>
<circle cx="1223" cy="118" r="6.3" fill="#d6304e" stroke="none"/>
<g font-family="Liberation Sans, sans-serif" font-size="8" font-weight="bold" fill="#10253f" stroke="none" text-anchor="middle">
<text x="1199" y="96">Z</text><text x="1223" y="121" fill="#3a0a14">X</text><text x="1205" y="117" fill="#1e3208" font-size="7">Y</text></g>
<path d="M1236.5,93.5L1233.5,96.5L1236.5,99.5" stroke="#aaa"/>
<!-- nav icons -->
<circle cx="1222.5" cy="159.5" r="4.5" fill="#ddd" stroke="none"/><path d="M1219,163L1215.5,166.5" stroke="#ddd" stroke-width="2"/><path d="M1220.5,159.5H1224.5M1222.5,157.5V161.5" stroke="#333"/>
<path d="M1217,185L1218,181V183L1219,178V182L1221,177V182L1223,178V182L1225,180L1224,187C1223,190 1219,190 1217,187Z" fill="#ddd" stroke="#ddd" stroke-width=".6"/>
<circle cx="1219" cy="205" r="3" stroke="#ddd"/><circle cx="1224" cy="204" r="2.5" stroke="#ddd"/><rect x="1218" y="210" width="7" height="4.5" stroke="#ddd"/><path d="M1225,212L1228,210V214.5" stroke="#ddd"/>
<path d="M1218,226H1225L1227,236H1215.5ZM1216.5,230H1226M1216,233H1226.5M1220,226L1219,236M1223,226L1224,236" stroke="#ddd" stroke-width=".9"/>
<!-- timeline icons -->
<path d="M16,744A5,5 0 1 0 16,753L20,748.5Z" fill="#eee" stroke="none"/><path d="M16,744A5,5 0 0 1 21,748.5H16Z" fill="#888" stroke="none"/>
<circle cx="554.5" cy="748.5" r="4.5" stroke="#aaa"/><circle cx="554.5" cy="748.5" r="2.5" stroke="#aaa"/>
<path d="M568,747L570,749L572,747" stroke="#666"/>
<path d="M586.5,744V753M594,744L588,748.5L594,753Z" fill="#ddd" stroke="#ddd"/>
<path d="M599,748.5L603,745.5V751.5ZM606.5,745L610,748.5L606.5,752L603.5,748.5Z" fill="#ddd" stroke="#ddd" stroke-width=".5"/>
<path d="M624,744.5L618,748.5L624,752.5Z" fill="#ddd" stroke="#ddd"/>
<path d="M633,744L640,748.5L633,753Z" fill="#eee" stroke="#eee"/>
<path d="M650,745L653,748.5L650,752L646.5,748.5ZM654,745.5L658,748.5L654,751.5Z" fill="#ddd" stroke="#ddd" stroke-width=".5"/>
<path d="M665,744L671,748.5L665,753ZM671.5,744V753" fill="#ddd" stroke="#ddd"/>
<circle cx="1089" cy="749.5" r="4.5" stroke="#ccc"/><path d="M1087,743.5H1091M1089,749.5V746.5" stroke="#ccc"/>
<path d="M4,771L6,773L4,775M1237,768L1235,770L1237,772" stroke="#777"/>
<!-- status icons -->
<rect x="8" y="799.5" width="8" height="11" rx="3" stroke="#aaa"/><rect x="9" y="800.5" width="3" height="4" fill="#bbb" stroke="none"/>
<rect x="78" y="799.5" width="8" height="11" rx="3" stroke="#aaa"/><rect x="81" y="800.5" width="2" height="4" fill="#bbb" stroke="none"/>
<circle cx="1455" cy="804" r="4.5" stroke="#888"/><path d="M1450,799L1460,809M1451,802H1459M1451,806H1459" stroke="#888" stroke-width=".8"/>
<!-- top right -->
<path d="M1244,23C1241,27 1241,29 1244,30C1247,29 1247,27 1244,23Z" fill="#ddd" stroke="none"/><circle cx="1250" cy="24" r="1.3" fill="#ddd" stroke="none"/><circle cx="1248" cy="30" r="2.6" stroke="#ddd"/>
<path d="M1329,32L1332,28.5M1331,24L1336,29M1332,25L1335,23L1337,25.5L1335,27.5" stroke="#777"/>
<rect x="1344" y="25" width="6.5" height="8" stroke="#ddd"/><path d="M1346,25V23H1352.5V30.5H1350.5" stroke="#ddd"/>
<path d="M1359,25L1365,31M1365,25L1359,31" stroke="#555"/>
<rect x="1381" y="24" width="8" height="8" fill="#ddd" stroke="none"/><path d="M1379,26V34H1387" stroke="#bbb"/>
<rect x="1466" y="25" width="6.5" height="8" stroke="#ddd"/><path d="M1468,25V23H1474.5V30.5H1472.5" stroke="#ddd"/>
<path d="M1483,25L1489,31M1489,25L1483,31" stroke="#555"/>
<!-- outliner header icons -->
<path d="M1252.5,44.5H1258M1254,44.5V52.5H1259M1254,48.5H1259" stroke="#ddd"/>
<rect x="1284" y="44" width="7" height="7" fill="#ccc" stroke="none"/><path d="M1282,46V53H1289" stroke="#aaa"/>
<circle cx="1326" cy="47" r="3.5" stroke="#bbb"/><path d="M1323.5,50L1320,53" stroke="#bbb" stroke-width="1.3"/>
<path d="M1451.5,44.5H1462.5L1458.5,49.5V53.5H1455.5V49.5Z" stroke="#ddd"/>
<rect x="1481.5" y="44.5" width="10" height="9" stroke="#ccc"/><circle cx="1490" cy="45" r="2.5" fill="#ddd" stroke="none"/><path d="M1481.5,47.5H1487" stroke="#ccc"/>
<!-- collection icons -->
<path d="M1259,62.5H1270V65H1259ZM1260,65.5H1269V72.5H1260Z" fill="#ddd" stroke="none"/><path d="M1263,68H1266" stroke="#333"/>
<path d="M1274.5,78H1285.5V80.5H1274.5ZM1275.5,81H1284.5V88H1275.5Z" fill="#ddd" stroke="none"/><path d="M1278.5,83.5H1281.5" stroke="#333"/>
<path d="M1261,82L1264,85L1267,82" stroke="#aaa"/>
<path d="M1263.5,95V149" stroke="#555"/>
<path d="M1278,96L1281,99L1278,102M1278,111.5L1281,114.5L1278,117.5M1278,127L1281,130L1278,133M1278,142.5L1281,145.5L1278,148.5" stroke="#aaa"/>
<!-- beauty -->
<g stroke="#9a6a43" stroke-width="1.3"><circle cx="1295.5" cy="95" r="1.3" fill="#9a6a43"/><path d="M1290,97L1295.5,98L1301,97M1295.5,98V100L1291.5,104.5M1295.5,100L1299.5,104.5"/></g>
<path d="M1353,95.5H1360L1362,100L1359,103H1357" stroke="#777"/><path d="M1360,103L1362,100" stroke="#777"/>
<g stroke="#1f7f63"><circle cx="1373" cy="94.5" r="1" fill="#1f7f63"/><path d="M1369,96L1373,98L1377,96M1373,98V100L1369.5,103.5M1373,100L1376.5,103.5"/></g>
<g stroke="#1f7f63"><circle cx="1388" cy="94.5" r="1" fill="#1f7f63"/><path d="M1384,96L1388,98L1392,96M1388,98V100L1384.5,103.5M1388,100L1391.5,103.5"/></g>
<path d="M1400.5,94.5H1410L1405.5,103.5Z" stroke="#a9723c" stroke-width="1.5"/>
<!-- camera -->
<circle cx="1292" cy="111" r="2.5" fill="#d68a47" stroke="none"/><circle cx="1297.5" cy="111" r="2.5" fill="#d68a47" stroke="none"/><rect x="1290" y="114" width="9" height="5.5" fill="#d68a47" stroke="none"/><path d="M1299,116L1302,114V119Z" fill="#d68a47" stroke="none"/>
<circle cx="1358" cy="111.5" r="2" stroke="#3fbf9b"/><circle cx="1362.5" cy="111.5" r="2" stroke="#3fbf9b"/><rect x="1356.5" y="115" width="9" height="4.5" stroke="#3fbf9b"/><path d="M1365.5,117L1367.5,115.5V119" stroke="#3fbf9b"/>
<!-- light -->
<circle cx="1295.5" cy="128" r="4.5" fill="#d68a47" stroke="none"/><rect x="1293" y="133" width="5" height="3.5" fill="#d68a47" stroke="none"/>
<circle cx="1351" cy="129" r="4.5" stroke="#1f9a76"/><circle cx="1351" cy="128" r="1" fill="#1f9a76" stroke="none"/><path d="M1351,129V133" stroke="#1f9a76"/>
<!-- lighting -->
<path d="M1295,141V147L1290,151M1295,147H1301" stroke="#d68a47" stroke-width="1.8"/>
<circle cx="1364" cy="144" r="4" fill="#d68a47" stroke="none"/><rect x="1362" y="148" width="4" height="3" fill="#d68a47" stroke="none"/>
<!-- checkbox -->
<rect x="1449" y="79" width="8.5" height="8.5" fill="#eee" stroke="none" rx="1"/><path d="M1451,83L1453,85.5L1456,81" stroke="#222" stroke-width="1.2"/>
<!-- eyes/cameras -->
<g id="e"><path d="M1464.5,83.5C1467,79.5 1471,79.5 1473.5,83.5C1471,87.5 1467,87.5 1464.5,83.5Z" stroke="#e0e0e0"/><circle cx="1469" cy="83.5" r="1.7" fill="#e0e0e0" stroke="none"/></g>
<g fill="#ddd" stroke="none"><path d="M1480,80H1483L1484,79H1486L1487,80H1490V88H1480Z"/></g><circle cx="1485" cy="84" r="2" fill="#333" stroke="none"/>
<path d="M1464.5,98C1467,101.5 1471,101.5 1473.5,98" stroke="#999"/>
<g fill="#ddd" stroke="none"><path d="M1480,95.5H1483L1484,94.5H1486L1487,95.5H1490V103.5H1480Z"/></g><circle cx="1485" cy="99.5" r="2" fill="#333" stroke="none"/>
<path d="M1464.5,114.5C1467,110.5 1471,110.5 1473.5,114.5C1471,118.5 1467,118.5 1464.5,114.5Z" stroke="#e0e0e0"/><circle cx="1469" cy="114.5" r="1.7" fill="#e0e0e0" stroke="none"/>
<g fill="#ddd" stroke="none"><path d="M1480,111H1483L1484,110H1486L1487,111H1490V119H1480Z"/></g><circle cx="1485" cy="115" r="2" fill="#333" stroke="none"/>
<path d="M1464.5,130C1467,126 1471,126 1473.5,130C1471,134 1467,134 1464.5,130Z" stroke="#e0e0e0"/><circle cx="1469" cy="130" r="1.7" fill="#e0e0e0" stroke="none"/>
<g fill="#ddd" stroke="none"><path d="M1480,126.5H1483L1484,125.5H1486L1487,126.5H1490V134.5H1480Z"/></g><circle cx="1485" cy="130.5" r="2" fill="#333" stroke="none"/>
<path d="M1464.5,145.5C1467,141.5 1471,141.5 1473.5,145.5C1471,149.5 1467,149.5 1464.5,145.5Z" stroke="#e0e0e0"/><circle cx="1469" cy="145.5" r="1.7" fill="#e0e0e0" stroke="none"/>
<g fill="#ddd" stroke="none"><path d="M1480,142H1483L1484,141H1486L1487,142H1490V150H1480Z"/></g><circle cx="1485" cy="146" r="2" fill="#333" stroke="none"/>
<!-- properties header -->
<rect x="1251" y="288" width="10" height="4" rx="2" fill="#ddd" stroke="none"/><rect x="1251" y="294" width="10" height="4" rx="2" stroke="#ddd"/>
<circle cx="1335" cy="291" r="3.5" stroke="#bbb"/><path d="M1332.5,294L1329,297" stroke="#bbb" stroke-width="1.3"/>
<!-- breadcrumb -->
<path d="M1275,313C1272,317 1272,320 1275,321C1279,320 1279,317 1275,313Z" fill="#ddd" stroke="none"/><circle cx="1280" cy="313.5" r="1.4" fill="#ddd" stroke="none"/><circle cx="1279" cy="319.5" r="2.6" stroke="#ddd"/>
<path d="M1328,313L1331,316L1328,319" stroke="#bbb"/>
<rect x="1342" y="312" width="8" height="8" fill="#ccc" stroke="none"/><path d="M1340,315V322H1347" stroke="#aaa"/>
<path d="M1481,321L1484,317.5M1483,313L1488,318M1484,314L1487,312L1489,314.5L1487,316.5" stroke="#888"/>
<!-- tabs -->
<path d="M1249,315V322M1247,315L1251,315M1255,319V327M1253,315L1255,319L1257,315M1249,322V327" stroke="#d5d5d5" stroke-width="1.4"/>
<rect x="1247.5" y="344.5" width="10" height="7" stroke="#d0d0d0"/><rect x="1249" y="342" width="4" height="2.5" fill="#d0d0d0" stroke="none"/><circle cx="1252.5" cy="348" r="1.5" stroke="#d0d0d0"/>
<path d="M1247,366H1258V372H1247ZM1249,366V364H1256V366M1249,370H1256V375H1249Z" stroke="#d0d0d0" fill="none"/>
<rect x="1249" y="387" width="8" height="8" fill="#bbb" stroke="none"/><path d="M1247,390V397H1254" stroke="#999"/>
<path d="M1250,408C1246,413 1246,416 1250,417C1254,416 1254,413 1250,408Z" fill="#ddd" stroke="none"/><circle cx="1255" cy="409" r="1.5" fill="#ddd" stroke="none"/><circle cx="1254.5" cy="415.5" r="2.6" stroke="#ddd"/>
<circle cx="1252" cy="435.5" r="5.2" fill="#a23a3e" stroke="none"/><path d="M1248,432C1251,433 1253,430 1255,431M1248,437L1252,438L1254,441" stroke="#2a2a2a"/>
<path d="M1247,458.5H1257V461H1247ZM1248,461V468H1256V461" stroke="#ccc"/><path d="M1250.5,464H1253.5" stroke="#ccc"/>
<!-- panel chevrons -->
<path d="M1276,340.5L1279,343.5L1282,340.5" stroke="#aaa"/>
<path d="M1277.5,428L1280.5,431L1277.5,434M1277.5,449L1280.5,452L1277.5,455M1277.5,470L1280.5,473L1277.5,476M1277.5,491L1280.5,494L1277.5,497M1277.5,512L1280.5,515L1277.5,518M1277.5,533L1280.5,536L1277.5,539M1277.5,554L1280.5,557L1277.5,560M1277.5,575L1280.5,578L1277.5,581M1277.5,597L1280.5,600L1277.5,603" stroke="#aaa"/>
<path d="M1287,452L1289.5,454.5L1293.5,449.5M1287,536.5L1289.5,539L1293.5,534" stroke="#fff" stroke-width="1.4"/>
<!-- drag grips -->
<g stroke="#666" stroke-width=".8" stroke-dasharray="1 1"><path d="M1480,341H1489M1480,343H1489M1480,430H1489M1480,432H1489M1480,451H1489M1480,453H1489M1480,472H1489M1480,474H1489M1480,493H1489M1480,495H1489M1480,514H1489M1480,516H1489M1480,535H1489M1480,537H1489M1480,556H1489M1480,558H1489M1480,577H1489M1480,579H1489M1480,598H1489M1480,600H1489"/></g>
<!-- field icons -->
<rect x="1368.5" y="361.5" width="9" height="9" stroke="#ccc"/><rect x="1370.5" y="363.5" width="5" height="5" fill="#eee" stroke="none"/>
<path d="M1475,363L1481,369M1481,363L1475,369" stroke="#ccc"/>
<path d="M1371,380C1368,384 1368,387 1371,388C1374,387 1374,384 1371,380Z" fill="#ddd" stroke="none"/><circle cx="1376" cy="381" r="1.3" fill="#ddd" stroke="none"/><circle cx="1375" cy="387" r="2.4" stroke="#ddd"/>
<path d="M1369,403H1378V410H1369Z" fill="#ddd" stroke="none"/><path d="M1369,401L1378,399" stroke="#ddd" stroke-width="2" stroke-dasharray="2 1"/>
</svg>
</div></body></html>
